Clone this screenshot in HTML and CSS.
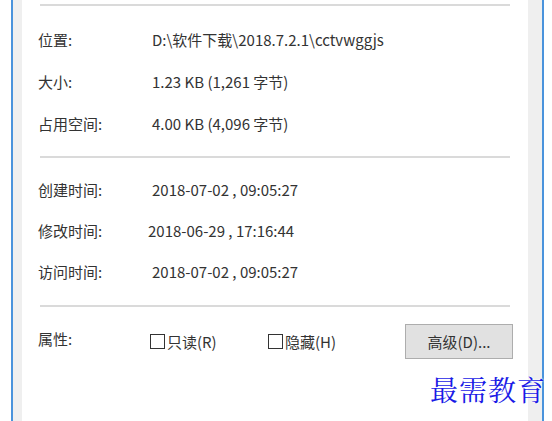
FILE: index.html
```html
<!DOCTYPE html>
<html lang="zh-CN">
<head>
<meta charset="utf-8">
<link rel="stylesheet" href="styles.css">
</head>
<body>
<div class="frame">
  <div class="outer-gap"></div>
  <div class="edge"></div>
  <div class="strip strip-left"></div>
  <div class="panel">
    <div class="sep sep-top"></div>
    <div class="group">
      <div class="row"><span class="label">位置:</span><span class="value">D:\软件下载\2018.7.2.1\cctvwggjs</span></div>
      <div class="row"><span class="label">大小:</span><span class="value">1.23 KB (1,261 字节)</span></div>
      <div class="row"><span class="label">占用空间:</span><span class="value">4.00 KB (4,096 字节)</span></div>
    </div>
    <div class="sep sep-mid"></div>
    <div class="group group-dates">
      <div class="row"><span class="label">创建时间:</span><span class="value">2018-07-02 , 09:05:27</span></div>
      <div class="row"><span class="label">修改时间:</span><span class="value value-shift">2018-06-29 , 17:16:44</span></div>
      <div class="row"><span class="label">访问时间:</span><span class="value">2018-07-02 , 09:05:27</span></div>
    </div>
    <div class="sep sep-bottom"></div>
    <div class="attrs">
      <span class="label label-attr">属性:</span>
      <label class="check check-first"><span class="box"></span>只读(R)</label>
      <label class="check"><span class="box"></span>隐藏(H)</label>
      <button class="btn">高级(D)...</button>
    </div>
  </div>
  <div class="strip strip-right"></div>
  <div class="edge"></div>
  <div class="outer-gap-r"></div>
</div>
<div class="watermark">最需教育</div>
</body>
</html>
```

FILE: styles.css
```css
html, body {
  margin: 0;
  padding: 0;
  background: #ffffff;
}
body {
  width: 552px;
  height: 421px;
  overflow: hidden;
  position: relative;
  font-family: "Noto Sans CJK SC", "Noto Sans", sans-serif;
  font-size: 15px;
  color: #333333;
}
.frame {
  display: flex;
  height: 421px;
}
.outer-gap { width: 11px; background: #ffffff; }
.outer-gap-r { width: 8px; background: #ffffff; }
.edge { width: 2px; background: #4a93dc; }
.strip { background: #efefef; }
.strip-left { width: 9px; }
.strip-right { width: 14px; }
.panel {
  flex: 1;
  background: #ffffff;
  padding: 4px 15px 0 16px;
  display: flex;
  flex-direction: column;
}
.sep {
  height: 2px;
  width: 470px;
  margin-left: 2px;
  background: #dadada;
}
.group {
  display: flex;
  flex-direction: column;
  gap: 22px;
  margin-top: 24px;
}
.group-dates { gap: 21px; margin-top: 22px; }
.sep-mid { margin-top: 22px; }
.sep-bottom { margin-top: 23px; }
.row {
  display: flex;
  height: 20px;
  line-height: 20px;
}
.label {
  width: 114px;
  flex: none;
}
.value { white-space: pre; }
.value-shift { margin-left: -4px; }
.attrs {
  display: flex;
  align-items: center;
  margin-top: 17px;
  height: 35px;
  line-height: 20px;
}
.label-attr { width: 112px; margin-bottom: 6px; }
.check {
  display: flex;
  align-items: center;
  gap: 2px;
  width: 118px;
}
.box {
  width: 13px;
  height: 13px;
  border: 1px solid #333333;
  background: #ffffff;
  flex: none;
}
.btn {
  margin-left: auto;
  width: 108px;
  height: 35px;
  background: #e1e1e1;
  border: 1px solid #adadad;
  font-family: "Noto Sans CJK SC", "Noto Sans", sans-serif;
  font-size: 15px;
  color: #333333;
  padding: 0;
}
.watermark {
  position: absolute;
  left: 430px;
  top: 372px;
  font-family: "AR PL UMing CN", "Noto Serif CJK SC", serif;
  font-size: 28px;
  line-height: 34px;
  letter-spacing: 1px;
  color: #1a1ae6;
  text-shadow: 0 0 2px #ffffff, 0 0 2px #ffffff;
}
```
